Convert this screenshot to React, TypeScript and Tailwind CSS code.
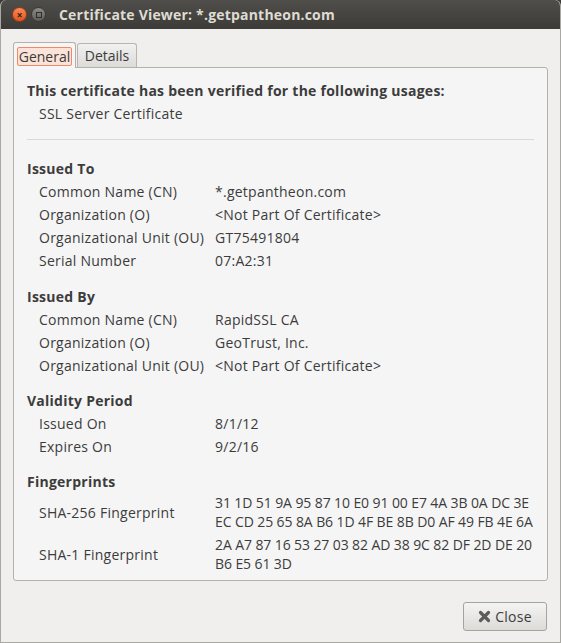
import React from "react";

type Row = { label: string; value: string };

const issuedTo: Row[] = [
  { label: "Common Name (CN)", value: "*.getpantheon.com" },
  { label: "Organization (O)", value: "<Not Part Of Certificate>" },
  { label: "Organizational Unit (OU)", value: "GT75491804" },
  { label: "Serial Number", value: "07:A2:31" },
];

const issuedBy: Row[] = [
  { label: "Common Name (CN)", value: "RapidSSL CA" },
  { label: "Organization (O)", value: "GeoTrust, Inc." },
  { label: "Organizational Unit (OU)", value: "<Not Part Of Certificate>" },
];

const validity: Row[] = [
  { label: "Issued On", value: "8/1/12" },
  { label: "Expires On", value: "9/2/16" },
];

const fingerprints = [
  {
    label: "SHA-256 Fingerprint",
    lines: ["31 1D 51 9A 95 87 10 E0 91 00 E7 4A 3B 0A DC 3E", "EC CD 25 65 8A B6 1D 4F BE 8B D0 AF 49 FB 4E 6A"],
  },
  {
    label: "SHA-1 Fingerprint",
    lines: ["2A A7 87 16 53 27 03 82 AD 38 9C 82 DF 2D DE 20", "B6 E5 61 3D"],
  },
];

const Section = ({ title, rows, className }: { title: string; rows: Row[]; className?: string }) => (
  <div className={className}>
    <div className="h-[23px] leading-[23px] font-bold">{title}</div>
    {rows.map((r) => (
      <div key={r.label} className="flex h-[23px] leading-[23px]">
        <div className="w-[188px] pl-[12px] whitespace-nowrap">{r.label}</div>
        <div className="whitespace-nowrap">{r.value}</div>
      </div>
    ))}
  </div>
);

export default function App() {
  return (
    <div
      className="w-[561px] h-[643px] bg-[#3c3b37] text-[14px] tracking-[0.25px] text-[#3c3c3c]"
      style={{ fontFamily: '"Open Sans", "DejaVu Sans", sans-serif' }}
    >
      <div className="w-full h-full flex flex-col rounded-t-[6px] overflow-hidden bg-[#f0efed] border-x border-b border-[#a9a8a3]">
        {/* Title bar */}
        <div className="h-[29px] shrink-0 flex items-center bg-gradient-to-b from-[#4f4e4a] to-[#3c3b37] -mx-px">
          <div className="ml-[12px] w-[15px] h-[15px] rounded-full bg-gradient-to-b from-[#f78a56] to-[#e2541e] border border-[#9c3b15] flex items-center justify-center text-[#3b1a0e] text-[10px] font-bold leading-none tracking-normal">
            ×
          </div>
          <div className="ml-[4px] w-[15px] h-[15px] rounded-full bg-gradient-to-b from-[#8c8b86] to-[#5e5d59] border border-[#3a3935] flex items-center justify-center">
            <div className="w-[6px] h-[6px] border border-[#2f2e2b]" />
          </div>
          <div className="ml-[13px] font-bold text-[#dfdbd2] text-[14px] tracking-[0.2px]">
            Certificate Viewer: *.getpantheon.com
          </div>
        </div>

        {/* Body */}
        <div className="flex-1 flex flex-col px-[12px] pt-[13px]">
          {/* Tabs */}
          <div className="flex items-end h-[26px] relative z-10">
            <div className="w-[63px] h-[26px] bg-[#f5f5f5] border border-b-0 border-[#b3b1ab] rounded-t-[3px] px-[3px] pt-[4px]">
              <div className="h-[19px] leading-[17px] border border-[#ee8a66] bg-[#fbe3d9] rounded-[2px] text-center tracking-normal">
                General
              </div>
            </div>
            <div className="ml-[1px] w-[60px] h-[24px] mb-px bg-gradient-to-b from-[#f1f1f0] to-[#dcdbd8] border border-b-0 border-[#b8b6b0] rounded-t-[3px] leading-[23px] text-center tracking-normal">
              Details
            </div>
          </div>

          {/* Panel */}
          <div className="-mt-px h-[514px] bg-[#f5f5f5] border border-[#b3b1ab] rounded-[3px] rounded-tl-none px-[13px] pt-[11px]">
            <div className="h-[23px] leading-[23px] font-bold whitespace-nowrap">
              This certificate has been verified for the following usages:
            </div>
            <div className="h-[23px] leading-[23px] pl-[12px]">SSL Server Certificate</div>
            <div className="mt-[14px] h-px bg-[#dad9d6]" />

            <Section title="Issued To" rows={issuedTo} className="mt-[17px]" />
            <Section title="Issued By" rows={issuedBy} className="mt-[13px]" />
            <Section title="Validity Period" rows={validity} className="mt-[12px]" />

            <div className="mt-[12px]">
              <div className="h-[23px] leading-[23px] font-bold">Fingerprints</div>
              {fingerprints.map((f, i) => (
                <div key={f.label} className={`flex items-center ${i > 0 ? "mt-[4px]" : ""}`}>
                  <div className="w-[188px] pl-[12px] whitespace-nowrap">{f.label}</div>
                  <div className="leading-[19px] tracking-[-0.1px] whitespace-nowrap">
                    {f.lines.map((l) => (
                      <div key={l}>{l}</div>
                    ))}
                  </div>
                </div>
              ))}
            </div>
          </div>

          {/* Buttons */}
          <div className="flex justify-end mt-[21px] pr-[1px]">
            <button className="w-[84px] h-[29px] flex items-center justify-center gap-[4px] rounded-[3px] border border-[#a5a39d] bg-gradient-to-b from-[#f4f4f3] to-[#dcdbd8] text-[#3c3c3c]">
              <svg width="13" height="13" viewBox="0 0 13 13">
                <path d="M2.5 2.5 L10.5 10.5 M10.5 2.5 L2.5 10.5" stroke="#5c5c5a" strokeWidth="3.2" strokeLinecap="round" />
              </svg>
              <span>Close</span>
            </button>
          </div>
        </div>
      </div>
    </div>
  );
}
